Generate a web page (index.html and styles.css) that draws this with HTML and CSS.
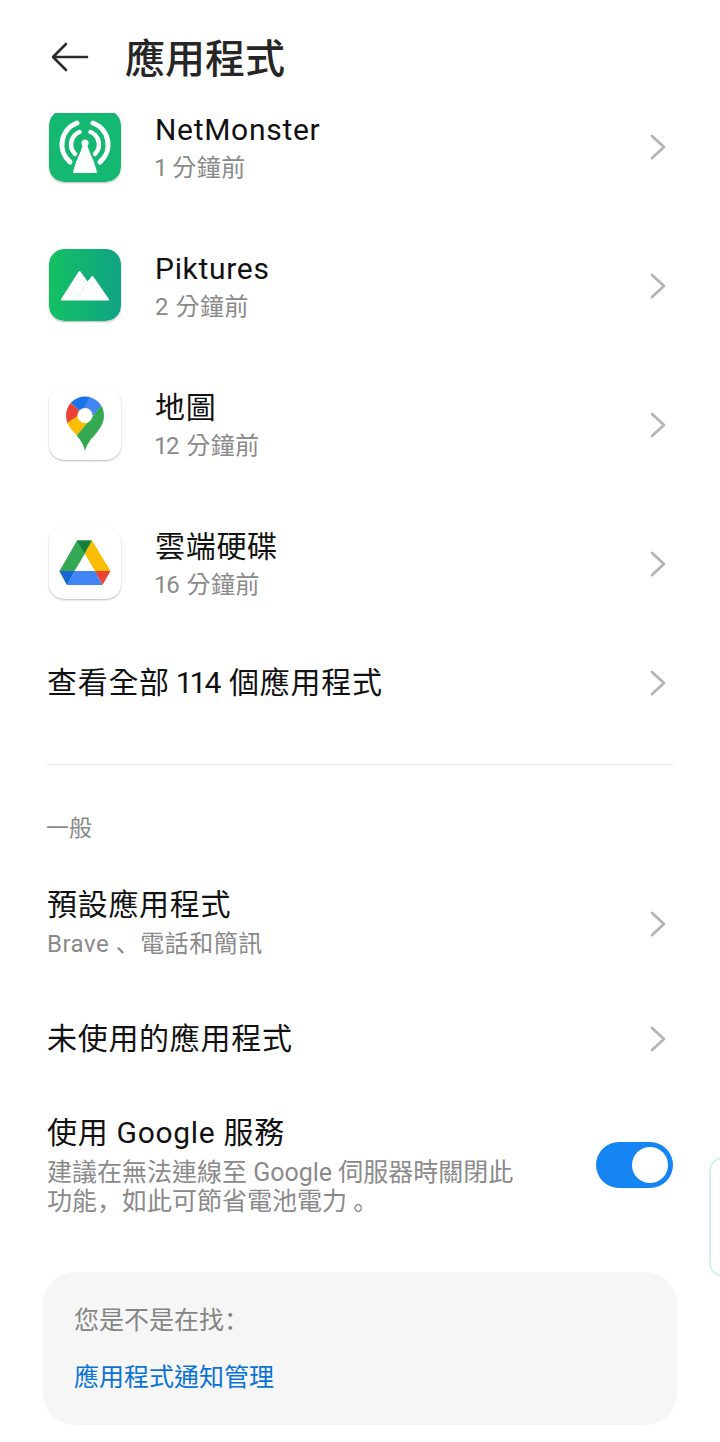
FILE: index.html
```html
<!DOCTYPE html>
<html lang="zh-Hant">
<head>
    <meta charset="UTF-8">
    <meta name="viewport" content="width=device-width, initial-scale=1.0">
    <title>應用程式</title>
    <link rel="stylesheet" href="styles.css">
</head>
<body>
    <div class="page">
        <div class="header">
            <svg class="back-icon" viewBox="0 0 38 30" fill="none" stroke="#2b2b2b" stroke-width="2.6" stroke-linecap="round" stroke-linejoin="round">
                <path d="M15 2 L2 15 L15 28 M2 15 H36"/>
            </svg>
            <div class="header-title">應用程式</div>
        </div>

        <div class="recent-clip">
            <div class="recent-list">
                <div class="app-row">
                    <svg class="app-icon" viewBox="0 0 72 72">
                        <rect width="72" height="72" rx="15" fill="#14b870"/>
                        <g fill="none" stroke="#fff" stroke-linecap="round">
                            <path d="M28 13 A23 23 0 0 0 21 52" stroke-width="5"/>
                            <path d="M44 13 A23 23 0 0 1 51 52" stroke-width="5"/>
                            <path d="M30.5 22 A13.5 13.5 0 0 0 26 44" stroke-width="4.5"/>
                            <path d="M41.5 22 A13.5 13.5 0 0 1 46 44" stroke-width="4.5"/>
                        </g>
                        <circle cx="36" cy="33" r="3.5" fill="#fff"/>
                        <path d="M33.5 36 H38.5 L41 43 L45 52 C46 55 46 56 47 58 L48 63 H24 L25 58 C26 56 26 55 27 52 L31 43 Z" fill="#fff"/>
                    </svg>
                    <div class="row-text">
                        <div class="row-title">NetMonster</div>
                        <div class="row-sub">1 分鐘前</div>
                    </div>
                    <svg class="chevron" viewBox="0 0 16 26" fill="none" stroke="#b4b4b4" stroke-width="2.8" stroke-linecap="round" stroke-linejoin="round"><path d="M2 2 L14 13 L2 24"/></svg>
                </div>
                <div class="app-row">
                    <svg class="app-icon" viewBox="0 0 72 72">
                        <defs>
                            <linearGradient id="pikturesBg" x1="0" y1="0" x2="1" y2="0">
                                <stop offset="0" stop-color="#14c163"/>
                                <stop offset="1" stop-color="#10a285"/>
                            </linearGradient>
                        </defs>
                        <rect width="72" height="72" rx="15" fill="url(#pikturesBg)"/>
                        <path d="M12 51 L30.5 22 L38.5 33 L43.5 27 L60 51 Z" fill="#fff" stroke="#fff" stroke-width="1" stroke-linejoin="round"/>
                        <path d="M38.5 33 L27 51" stroke="#e4e4e4" stroke-width="0.8"/>
                    </svg>
                    <div class="row-text">
                        <div class="row-title">Piktures</div>
                        <div class="row-sub">2 分鐘前</div>
                    </div>
                    <svg class="chevron" viewBox="0 0 16 26" fill="none" stroke="#b4b4b4" stroke-width="2.8" stroke-linecap="round" stroke-linejoin="round"><path d="M2 2 L14 13 L2 24"/></svg>
                </div>
                <div class="app-row">
                    <svg class="app-icon app-icon-white" viewBox="0 0 72 72">
                        <defs>
                            <clipPath id="pinClip">
                                <path d="M36 63 C34 53 27 47 22 41 C19 37 17 33 17 27.5 A19 19 0 0 1 55 27.5 C55 36 50 42 45 48 C41 52 38 56 36 63 Z"/>
                            </clipPath>
                        </defs>
                        <g clip-path="url(#pinClip)">
                            <path d="M27.7 47.5 L54 15 L70 30 V70 H20 Z" fill="#34a853"/>
                            <path d="M27.7 47.5 L45 27 L30 20 L10 40 Z" fill="#fbbc04"/>
                            <path d="M10 40 L33 25 L21 14 H10 Z" fill="#ea4335"/>
                            <path d="M21 14 L33 25 L43 5 L21 0 Z" fill="#1a73e8"/>
                            <path d="M42 5 L33 25 L42 30 L54 15 L56 5 Z" fill="#4285f4"/>
                        </g>
                        <circle cx="36" cy="27.5" r="7.6" fill="#fff"/>
                    </svg>
                    <div class="row-text">
                        <div class="row-title">地圖</div>
                        <div class="row-sub">12 分鐘前</div>
                    </div>
                    <svg class="chevron" viewBox="0 0 16 26" fill="none" stroke="#b4b4b4" stroke-width="2.8" stroke-linecap="round" stroke-linejoin="round"><path d="M2 2 L14 13 L2 24"/></svg>
                </div>
                <div class="app-row">
                    <svg class="app-icon app-icon-white" viewBox="0 0 72 72">
                        <path d="M28 13.5 H43 L36 26.5 L25.5 44 L18 58 L10.5 44 Z" fill="#34a853"/>
                        <path d="M28 13.5 H43 L35.7 26.5 Z" fill="#188038"/>
                        <path d="M43 13.5 L61.5 44 H46 L35.7 26.5 Z" fill="#fbbc04"/>
                        <path d="M10.5 44 H25.7 L18 58 Z" fill="#1967d2"/>
                        <path d="M25.7 44 H46 L53.5 58 H20 C19 58 18.5 58 18 57.5 Z" fill="#4285f4"/>
                        <path d="M46 44 H61.5 L53.5 58 Z" fill="#ea4335"/>
                    </svg>
                    <div class="row-text">
                        <div class="row-title">雲端硬碟</div>
                        <div class="row-sub">16 分鐘前</div>
                    </div>
                    <svg class="chevron" viewBox="0 0 16 26" fill="none" stroke="#b4b4b4" stroke-width="2.8" stroke-linecap="round" stroke-linejoin="round"><path d="M2 2 L14 13 L2 24"/></svg>
                </div>
            </div>
        </div>

        <div class="see-all">
            <div class="row-title">查看全部 114 個應用程式</div>
            <svg class="chevron" viewBox="0 0 16 26" fill="none" stroke="#b4b4b4" stroke-width="2.8" stroke-linecap="round" stroke-linejoin="round"><path d="M2 2 L14 13 L2 24"/></svg>
        </div>

        <div class="divider"></div>

        <div class="section-label">一般</div>

        <div class="setting-row default-apps">
            <div class="row-text">
                <div class="row-title">預設應用程式</div>
                <div class="row-sub">Brave <span class="punct" lang="zh-Hans">、</span>電話和簡訊</div>
            </div>
            <svg class="chevron" viewBox="0 0 16 26" fill="none" stroke="#b4b4b4" stroke-width="2.8" stroke-linecap="round" stroke-linejoin="round"><path d="M2 2 L14 13 L2 24"/></svg>
        </div>

        <div class="setting-row unused-apps">
            <div class="row-title">未使用的應用程式</div>
            <svg class="chevron" viewBox="0 0 16 26" fill="none" stroke="#b4b4b4" stroke-width="2.8" stroke-linecap="round" stroke-linejoin="round"><path d="M2 2 L14 13 L2 24"/></svg>
        </div>

        <div class="setting-row google-row">
            <div class="row-text">
                <div class="row-title">使用 Google 服務</div>
                <div class="row-desc">建議在無法連線至 Google 伺服器時關閉此<br>功能<span class="punct" lang="zh-Hans">，</span>如此可節省電池電力 <span class="punct" lang="zh-Hans">。</span></div>
            </div>
            <div class="toggle"><div class="toggle-knob"></div></div>
        </div>

        <div class="suggest-card">
            <div class="suggest-label">您是不是在找<span class="punct" lang="zh-Hans">：</span></div>
            <div class="suggest-link">應用程式通知管理</div>
        </div>

        <div class="edge-handle"></div>
    </div>
</body>
</html>
```

FILE: styles.css
```css
* {
    box-sizing: border-box;
}
html, body {
    margin: 0;
    padding: 0;
    background-color: #fff;
}
body {
    font-family: Roboto, "Noto Sans CJK TC", sans-serif;
    font-variant-numeric: proportional-nums;
    color: #111;
}
.page {
    position: relative;
    width: 720px;
    height: 1442px;
    overflow: hidden;
}
.punct {
    font-family: "Noto Sans CJK SC", sans-serif;
    line-height: 1;
}
.header {
    display: flex;
    align-items: center;
    height: 113px;
    padding: 0 0 0 51px;
}
.back-icon {
    width: 38px;
    height: 30px;
    margin-right: 36px;
}
.header-title {
    font-size: 40px;
    font-weight: 500;
    color: #262626;
    line-height: 1;
    margin-top: 6px;
}
.recent-clip {
    height: 513px;
    overflow: hidden;
}
.recent-list {
    margin-top: -36px;
}
.app-row {
    display: flex;
    align-items: center;
    height: 139px;
    padding: 0 54px 0 49px;
}
.app-icon {
    flex: none;
    width: 72px;
    height: 72px;
    margin-top: -2px;
    border-radius: 15px;
    box-shadow: 0 1px 2px rgba(0, 0, 0, 0.28);
}
.app-icon-white {
    background-color: #fff;
}
.app-row .row-text {
    margin-left: 34px;
    padding-top: 2px;
}
.row-text {
    flex: 1;
    min-width: 0;
}
.row-title {
    font-size: 30px;
    line-height: 40px;
    color: #111;
    letter-spacing: 0.7px;
}
.row-sub {
    font-size: 24px;
    line-height: 38px;
    color: #8a8a8a;
    letter-spacing: 0.5px;
}
.app-row .row-sub {
    line-height: 36px;
}
.chevron {
    flex: none;
    width: 16px;
    height: 26px;
}
.see-all {
    display: flex;
    align-items: center;
    justify-content: space-between;
    height: 138px;
    padding: 0 54px 24px 47px;
}
.see-all .row-title {
    word-spacing: -1px;
}
.divider {
    height: 1px;
    margin: 0 47px;
    background-color: #e6e6e6;
}
.section-label {
    height: 62px;
    padding: 46px 0 0 46px;
    font-size: 23px;
    line-height: 36px;
    color: #8a8a8a;
}
.setting-row {
    display: flex;
    align-items: center;
    padding: 0 54px 0 47px;
}
.default-apps {
    padding-top: 58px;
}
.unused-apps {
    padding-top: 56px;
    justify-content: space-between;
}
.google-row {
    margin-top: 54px;
    padding-right: 47px;
    align-items: flex-start;
}
.row-desc {
    margin-top: 5px;
    font-size: 25px;
    line-height: 29px;
    color: #8a8a8a;
}
.toggle {
    flex: none;
    display: flex;
    align-items: center;
    justify-content: flex-end;
    width: 77px;
    height: 46px;
    margin-top: 29px;
    padding-right: 5px;
    border-radius: 23px;
    background-color: #1485f3;
}
.toggle-knob {
    width: 36px;
    height: 36px;
    border-radius: 50%;
    background-color: #fff;
}
.suggest-card {
    margin: 56px 43px 0;
    height: 153px;
    padding: 29px 31px;
    border-radius: 32px;
    background-color: #f6f6f6;
}
.suggest-label {
    font-size: 25px;
    line-height: 40px;
    color: #858585;
}
.suggest-link {
    margin-top: 17px;
    font-size: 25px;
    line-height: 40px;
    color: #0a74d6;
}
.edge-handle {
    position: absolute;
    left: 709px;
    top: 1157px;
    width: 30px;
    height: 120px;
    border: 2px solid #d3f2f3;
    border-radius: 14px;
    background-color: #fff;
}
```
